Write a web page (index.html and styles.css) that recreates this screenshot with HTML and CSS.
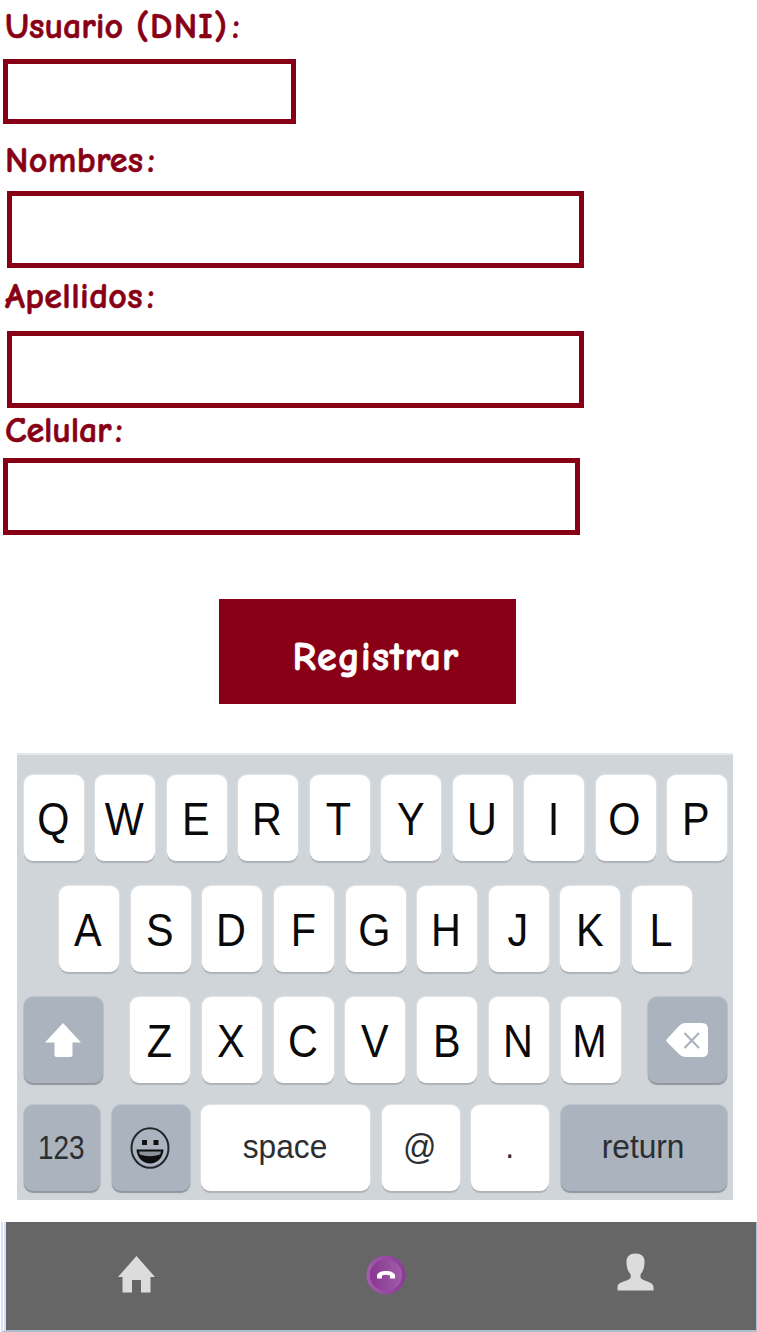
FILE: index.html
```html
<!DOCTYPE html>
<html lang="es">
<head>
<meta charset="utf-8">
<title>Registro</title>
<link rel="stylesheet" href="styles.css">
</head>
<body>
<main class="screen">
  <form class="form">
    <label class="label label-user" for="dni"><span>Usuario <span class="acronym">(DNI)</span><span class="colon">:</span></span></label>
    <input class="field field-short" id="dni">
    <label class="label label-names" for="nombres"><span>Nombres<span class="colon">:</span></span></label>
    <input class="field field-inset" id="nombres">
    <label class="label label-surnames" for="apellidos"><span>Apellidos<span class="colon">:</span></span></label>
    <input class="field field-inset" id="apellidos">
    <label class="label label-phone" for="celular"><span>Celular<span class="colon">:</span></span></label>
    <input class="field" id="celular">
    <button class="submit" type="button"><span>Registrar</span></button>
  </form>

  <section class="keyboard">
    <div class="row">
      <div class="key"><span>Q</span></div><div class="key"><span>W</span></div><div class="key"><span>E</span></div><div class="key"><span>R</span></div><div class="key"><span>T</span></div><div class="key"><span>Y</span></div><div class="key"><span>U</span></div><div class="key"><span>I</span></div><div class="key"><span>O</span></div><div class="key"><span>P</span></div>
    </div>
    <div class="row row-center">
      <div class="key"><span>A</span></div><div class="key"><span>S</span></div><div class="key"><span>D</span></div><div class="key"><span>F</span></div><div class="key"><span>G</span></div><div class="key"><span>H</span></div><div class="key"><span>J</span></div><div class="key"><span>K</span></div><div class="key"><span>L</span></div>
    </div>
    <div class="row row-split">
      <div class="key key-dark key-side">
        <svg width="36" height="36" viewBox="0 0 36 36"><path fill="#fff" d="M18 1 36 20.500H27.500V33Q27.500 35 25.500 35H11.500Q9.500 35 9.500 33V20.500H0Z"/></svg>
      </div>
      <div class="letters">
        <div class="key"><span>Z</span></div><div class="key"><span>X</span></div><div class="key"><span>C</span></div><div class="key"><span>V</span></div><div class="key"><span>B</span></div><div class="key"><span>N</span></div><div class="key"><span>M</span></div>
      </div>
      <div class="key key-dark key-side">
        <svg width="43" height="35" viewBox="0 0 43 35"><path fill="#fff" d="M1 16 13 3Q15.500 0 19 0H36Q42 0 42 6V28Q42 34 36 34H19Q15.500 34 13 31L1 19Q-.5 17.500 1 16Z"/><path stroke="#abb3be" stroke-width="2.200" d="M18.500 10 33 25M33 10 18.500 25"/></svg>
      </div>
    </div>
    <div class="row row-bottom">
      <div class="key key-dark key-word"><span class="digits">123</span></div>
      <div class="key key-dark">
        <svg width="40" height="43" viewBox="0 0 40 43"><ellipse cx="20" cy="21" rx="18.500" ry="19.800" fill="none" stroke="#22262a" stroke-width="2"/><rect x="12" y="13" width="5" height="5" fill="#111"/><rect x="23.500" y="13" width="5" height="5" fill="#111"/><path d="M6.500 22.500H33.500C33 31 27 36.500 20 36.500S7 31 6.500 22.500Z" fill="#0c0e10"/><path d="M9 24.500H31L30.200 27.500Q20 31 9.800 27.500Z" fill="#8b929b"/></svg>
      </div>
      <div class="key key-word"><span>space</span></div>
      <div class="key key-word"><span class="at">@</span></div>
      <div class="key key-word"><span>.</span></div>
      <div class="key key-dark key-word"><span>return</span></div>
    </div>
  </section>

  <nav class="nav">
    <a class="nav-item nav-home"><svg width="37" height="37" viewBox="0 0 37 37"><path fill="#dcdcdc" d="M18.500 0 37 21H32.500V36.500H23V24H14V36.500H4.500V21H0Z"/></svg></a>
    <a class="nav-item nav-call"><svg width="40" height="40" viewBox="0 0 40 40">
      <defs><linearGradient id="rim"><stop offset="0" stop-color="#a45bae"/><stop offset="1" stop-color="#8b3996"/></linearGradient><linearGradient id="disc"><stop offset="0" stop-color="#87368f"/><stop offset="1" stop-color="#a15da9"/></linearGradient></defs>
      <circle cx="20" cy="20" r="19.500" fill="url(#rim)"/><circle cx="20" cy="20" r="16" fill="url(#disc)"/>
      <path fill="#fff" d="M11 23.500V20C12 17.500 15.500 16 20 16S28 17.500 29 20V23.500H24V20.500Q20 19 16 20.500V23.500Z"/></svg></a>
    <a class="nav-item nav-user"><svg width="37" height="38" viewBox="0 0 37 38"><path fill="#dcdcdc" d="M18.500.5C24.500.5 27.500 3.500 27.500 8.500C27.500 14 26.500 18 23.500 21.500V24.500C25 28.500 36.500 28 36.500 34V37.500H.5V34C.5 28 12.500 28.500 13.700 24.500V21.500C10.500 18 9.500 14 9.500 8.500C9.500 3.500 12.500 .5 18.500.5Z"/></svg></a>
  </nav>
</main>
</body>
</html>
```
FILE: styles.css
```css
* { box-sizing: border-box; }

body { margin: 0; background: #fff; }

.screen {
  display: flex;
  flex-direction: column;
  width: 757px;
  height: 1332px;
  overflow: hidden;
}

.form {
  display: flex;
  flex-direction: column;
  align-items: flex-start;
  height: 753px;
  padding-left: 3px;
}

.label {
  display: flex;
  align-items: center;
  padding-left: 2px;
  color: #880015;
  font: 700 36px/44px "Comic Sans MS", "Comic Neue", "Noto Sans", sans-serif;
  letter-spacing: .35px;
  -webkit-text-stroke: .6px #880015;
  white-space: pre;
}
.label-user { height: 59px; padding-bottom: 6px; letter-spacing: 0; }
.label-names { height: 67px; padding-top: 7px; }
.label-surnames { height: 63px; padding-bottom: 6px; }
.label-phone { height: 50px; padding-bottom: 4px; letter-spacing: -.2px; }
.acronym { letter-spacing: 1.2px; }
.colon { margin-left: 4px; }

.field {
  width: 577px;
  height: 77px;
  margin: 0;
  border: 5px solid #880015;
  border-radius: 0;
  background: #fff;
  outline: 0;
}
.field-short { width: 293px; height: 65px; }
.field-inset { margin-left: 4px; }

.submit {
  width: 297px;
  height: 105px;
  margin: 64px 0 0 216px;
  padding: 10px 0 0 17px;
  border: 0;
  background: #880015;
  color: #fff;
  font: 700 40px/48px "Comic Sans MS", "Comic Neue", "Noto Sans", sans-serif;
  letter-spacing: 1.2px;
  -webkit-text-stroke: .8px #fff;
}

.keyboard {
  display: flex;
  flex-direction: column;
  gap: 25px;
  width: 716px;
  height: 447px;
  margin-left: 17px;
  padding: 20px 6px 0 7px;
  border-top: 2px solid #e4e8eb;
  background: #d0d5da;
}
.row { display: flex; justify-content: space-between; height: 86px; }
.row-center { padding: 0 35px; }
.row-bottom {
  display: grid;
  grid-template-columns: 76px 78px 169px 78px 78px 166px;
  margin-top: -3px;
}
.letters { display: flex; justify-content: space-between; width: 491px; }

.key {
  display: flex;
  align-items: center;
  justify-content: center;
  width: 60px;
  height: 86px;
  padding: 0 2px 0 0;
  border-radius: 9px;
  background: #fff;
  box-shadow: 0 2px 1px #aeb2b6, 0 0 1px 1px #e1e5e9;
  color: #0a0a0a;
  font: 47px/1 "Liberation Sans", Arial, sans-serif;
}
.key span { transform: scaleX(.88); }
.key-side { width: 79px; }
.row-bottom .key { width: auto; }
.key-dark {
  padding: 0 1px 0 0;
  background: #abb3be;
  box-shadow: 0 2px 1px #90969d, 0 0 1px 1px #bdc4cc;
}
.key-word { padding: 0 2px 3px 0; color: #2c2e31; font-size: 33px; }
.key-word span { transform: scaleX(.96); }
.key-word .digits { font-size: 34px; transform: scaleX(.82); }
.key-word .at { font-size: 35px; transform: scaleX(.94); }

.nav {
  display: grid;
  grid-template-columns: repeat(3, 1fr);
  width: 756px;
  height: 110px;
  margin: 22px 0 0 1px;
  border-left: 5px double #d6e3f4;
  border-right: 1px solid #aebcd0;
  border-bottom: 2px solid #aebcd0;
  background: #666;
  background-clip: padding-box;
}
.nav-item { display: flex; align-items: center; justify-content: center; padding-bottom: 3px; }
.nav-home { padding-left: 10px; }
.nav-call { padding-left: 9px; }
.nav-user { padding-left: 9px; padding-bottom: 8px; }
```
